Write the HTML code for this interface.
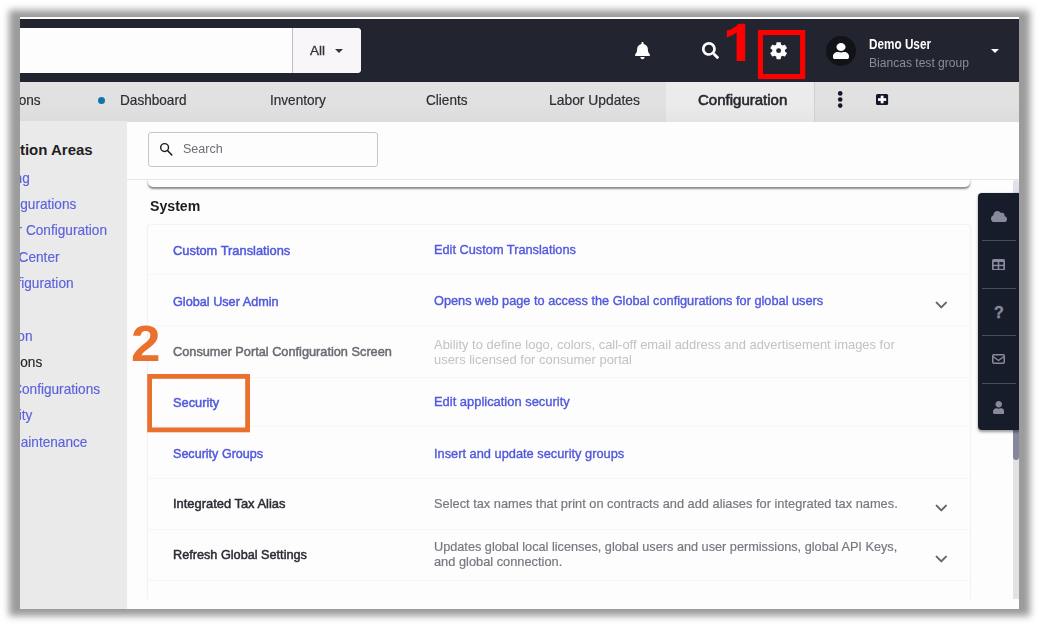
<!DOCTYPE html>
<html>
<head>
<meta charset="utf-8">
<style>
html,body{margin:0;padding:0;}
body{width:1037px;height:627px;background:#fff;position:relative;overflow:hidden;font-family:"Liberation Sans",sans-serif;}
*{box-sizing:border-box;}
.abs{position:absolute;}
.t{position:absolute;white-space:nowrap;line-height:1;}
#shadow{position:absolute;left:9.2px;top:9.7px;width:1020.8px;height:606.3px;background:#9b9b9b;filter:blur(3.9px);}
#frame{position:absolute;left:20px;top:17px;width:999px;height:592px;background:#fdfdfd;overflow:hidden;}
/* coordinates inside frame are page coords minus (20,17); use #page wrapper to keep page coords */
#page{position:absolute;left:-20px;top:-17px;width:1037px;height:627px;}
#topbar{left:20px;top:19px;width:999px;height:63px;background:#22252f;}
#nav{left:20px;top:82px;width:999px;height:39.5px;background:linear-gradient(#e3e2e3,#e1e0e1 65%,#dcdbdc);}
#nav .t{font-size:13.5px;color:#2d2d33;top:93px;}
#side{left:20px;top:120.8px;width:107px;height:488.2px;background:#ebeaeb;overflow:hidden;}
.sl{position:absolute;white-space:nowrap;font-size:14.5px;color:#5a62dc;line-height:16px;transform-origin:100% 50%;transform:scaleX(0.94);-webkit-text-stroke:0.15px currentColor;}
.row-l{position:absolute;left:173.5px;white-space:nowrap;font-size:14px;line-height:16px;-webkit-text-stroke:0.4px currentColor;transform-origin:0 50%;transform:scaleX(0.917);}
.row-r{position:absolute;left:433.5px;white-space:nowrap;font-size:14px;line-height:15px;transform-origin:0 50%;transform:scaleX(0.913);}
.blue{color:#535bd6;}
.sep{position:absolute;left:148px;width:822px;height:1px;background:#f6f5f8;}
</style>
</head>
<body>
<div id="shadow"></div>
<div id="frame"><div id="page">

<!-- top bar -->
<div id="topbar" class="abs"></div>
<div class="abs" style="left:0;top:28.4px;width:361px;height:44.4px;background:#fdfdfd;border-radius:0 4px 4px 0;"></div>
<div class="abs" style="left:293px;top:28.4px;width:68px;height:44.4px;background:#f8f6f9;border-radius:0 4px 4px 0;"></div>
<div class="abs" style="left:292.2px;top:28.4px;width:1px;height:44.4px;background:#bdbdc1;"></div>
<div class="abs" style="left:335px;top:49px;width:0;height:0;border-left:4px solid transparent;border-right:4px solid transparent;border-top:4px solid #33343c;"></div>

<!-- nav -->
<div id="nav" class="abs">
</div>
<div class="abs" style="left:666px;top:82px;width:148px;height:39.5px;background:linear-gradient(#ececec,#eaeaea 65%,#e4e4e4);"></div>
<div class="abs" style="left:814px;top:82px;width:1px;height:39.5px;background:#cfcfcf;"></div>
<div id="navt">
<div class="t" style="right:996.5px;top:91.95px;font-size:14.5px;line-height:16.5px;color:#2d2d33;-webkit-text-stroke:0.2px currentColor;transform-origin:100% 50%;transform:scaleX(0.94);">Reservations</div>
<div class="abs" style="left:97.8px;top:96.7px;width:7px;height:7px;border-radius:50%;background:#0f74aa;"></div>
</div>


<!-- top icons -->
<svg class="abs" style="left:635px;top:42.2px;" width="15" height="17.4" viewBox="0 0 448 512"><path fill="#fdfdfd" d="M224 512c35.32 0 63.97-28.65 63.97-64H160.03c0 35.35 28.65 64 63.97 64zm215.39-149.71c-19.32-20.76-55.47-51.99-55.47-154.29 0-77.7-54.48-139.9-127.94-155.16V32c0-17.67-14.32-32-31.98-32s-31.98 14.33-31.98 32v20.84C118.56 68.1 64.08 130.3 64.08 208c0 102.3-36.15 133.53-55.47 154.29-6 6.45-8.66 14.16-8.61 21.71.11 16.4 12.98 32 32.1 32h383.8c19.12 0 32-15.6 32.1-32 .05-7.55-2.61-15.27-8.61-21.71z"/></svg>
<svg class="abs" style="left:701.9px;top:42.4px;" width="17" height="17" viewBox="0 0 512 512"><path fill="#fdfdfd" d="M505 442.7L405.3 343c-4.500-4.500-10.600-7-17-7H372c27.600-35.300 44-79.700 44-128C416 93.100 322.900 0 208 0S0 93.100 0 208s93.100 208 208 208c48.300 0 92.700-16.400 128-44v16.300c0 6.400 2.500 12.500 7 17l99.700 99.700c9.400 9.400 24.600 9.400 33.900 0l28.300-28.300c9.400-9.400 9.400-24.600.1-34zM208 336c-70.700 0-128-57.200-128-128 0-70.700 57.200-128 128-128 70.700 0 128 57.200 128 128 0 70.700-57.200 128-128 128z"/></svg>
<svg class="abs" style="left:768.1px;top:40.1px;" width="21.250" height="21.250" viewBox="0 0 24 24"><path fill="#fdfdfd" d="M19.140,12.940c0.040-0.300,0.060-0.610,0.060-0.940c0-0.320-0.020-0.640-0.070-0.940l2.030-1.580c0.180-0.140,0.230-0.410,0.120-0.610l-1.920-3.320c-0.120-0.220-0.370-0.290-0.590-0.220l-2.390,0.960c-0.500-0.380-1.030-0.700-1.620-0.940L14.400,2.810c-0.040-0.240-0.240-0.410-0.480-0.410h-3.840c-0.240,0-0.430,0.170-0.470,0.410L9.250,5.350C8.660,5.590,8.120,5.920,7.630,6.290L5.240,5.330c-0.220-0.080-0.470,0-0.590,0.220L2.740,8.870C2.620,9.080,2.660,9.340,2.860,9.480l2.030,1.580C4.840,11.360,4.800,11.690,4.800,12s0.020,0.640,0.070,0.940l-2.030,1.580c-0.180,0.140-0.230,0.410-0.120,0.610l1.920,3.320c0.120,0.220,0.370,0.290,0.590,0.220l2.390-0.960c0.500,0.380,1.030,0.700,1.620,0.940l0.360,2.540c0.050,0.240,0.240,0.410,0.480,0.410h3.840c0.240,0,0.440-0.170,0.470-0.410l0.360-2.540c0.590-0.240,1.130-0.560,1.620-0.940l2.390,0.960c0.220,0.080,0.470,0,0.590-0.220l1.920-3.320c0.120-0.220,0.070-0.470-0.120-0.610L19.140,12.940z"/><circle cx="12" cy="12" r="2.800" fill="#22252f"/></svg>
<!-- avatar -->
<div class="abs" style="left:826px;top:36px;width:30px;height:30px;border-radius:50%;background:#121317;"></div>
<svg class="abs" style="left:833px;top:43px;" width="16" height="16" preserveAspectRatio="none" viewBox="0 0 448 512"><path fill="#fdfdfd" d="M224 256c70.700 0 128-57.300 128-128S294.700 0 224 0 96 57.300 96 128s57.300 128 128 128zm89.600 32h-16.700c-22.200 10.200-46.900 16-72.900 16s-50.600-5.800-72.900-16h-16.700C60.200 288 0 348.200 0 422.400V464c0 26.500 21.500 48 48 48h352c26.500 0 48-21.500 48-48v-41.600c0-74.200-60.200-134.400-134.400-134.400z"/></svg>
<div class="abs" style="left:991px;top:49px;width:0;height:0;border-left:4.5px solid transparent;border-right:4.5px solid transparent;border-top:4.5px solid #fdfdfd;"></div>
<!-- annotation 1 -->
<svg class="abs" style="left:750px;top:25px;" width="65" height="60" viewBox="750 25 65 60"><rect x="760.450" y="32.550" width="42.200" height="44" fill="none" stroke="#fe0000" stroke-width="5.100"/></svg>
<svg class="abs" style="left:720px;top:20px;" width="30" height="45" viewBox="720 20 30 45"><path fill="#fe0000" d="M745.200,23.800 L738.300,23.800 Q735,28.600 726.800,30.600 L726.800,37.500 Q732.500,36 736.600,32.600 L736.600,61.100 L745.200,61.100 Z"/></svg>
<!-- nav icons -->
<svg class="abs" style="left:830px;top:85px;" width="70" height="30" viewBox="830 85 70 30"><g fill="#12172c"><circle cx="840.200" cy="93.400" r="2.300"/><circle cx="840.200" cy="99.500" r="2.300"/><circle cx="840.200" cy="105.600" r="2.300"/><rect x="876" y="93.900" width="12.100" height="11.100" rx="1.500"/></g><g fill="#fdfdfd"><rect x="878" y="98.200" width="8.200" height="2.700"/><rect x="880.700" y="95.700" width="2.800" height="7.600"/></g></svg>


<!-- sidebar -->
<div id="side" class="abs">
<div class="t" style="right:34.3px;top:19.9px;font-size:15px;line-height:17px;color:#1f1f24;font-weight:bold;transform-origin:100% 50%;transform:scaleX(1.0);">Configuration Areas</div>
<div class="t" style="right:97.5px;top:48.9px;font-size:14.5px;line-height:16.5px;color:#5a62dc;-webkit-text-stroke:0.15px currentColor;transform-origin:100% 50%;transform:scaleX(0.94);">Accounting</div>
<div class="t" style="right:50.7px;top:75.3px;font-size:14.5px;line-height:16.5px;color:#5a62dc;-webkit-text-stroke:0.15px currentColor;transform-origin:100% 50%;transform:scaleX(0.94);">Contract Configurations</div>
<div class="t" style="right:20.3px;top:101.5px;font-size:14.5px;line-height:16.5px;color:#5a62dc;-webkit-text-stroke:0.15px currentColor;transform-origin:100% 50%;transform:scaleX(0.94);">Printer Configuration</div>
<div class="t" style="right:67.0px;top:127.8px;font-size:14.5px;line-height:16.5px;color:#5a62dc;-webkit-text-stroke:0.15px currentColor;transform-origin:100% 50%;transform:scaleX(0.94);">Call Center</div>
<div class="t" style="right:53.0px;top:154.4px;font-size:14.5px;line-height:16.5px;color:#5a62dc;-webkit-text-stroke:0.15px currentColor;transform-origin:100% 50%;transform:scaleX(0.94);">Email Configuration</div>
<div class="t" style="right:94.0px;top:207.4px;font-size:14.5px;line-height:16.5px;color:#5a62dc;-webkit-text-stroke:0.15px currentColor;transform-origin:100% 50%;transform:scaleX(0.94);">Navigation</div>
<div class="t" style="right:84.5px;top:233.4px;font-size:14.5px;line-height:16.5px;color:#1f1f24;-webkit-text-stroke:0.15px currentColor;transform-origin:100% 50%;transform:scaleX(0.94);">Add ons</div>
<div class="t" style="right:27.4px;top:259.8px;font-size:14.5px;line-height:16.5px;color:#5a62dc;-webkit-text-stroke:0.15px currentColor;transform-origin:100% 50%;transform:scaleX(0.94);">Quote Configurations</div>
<div class="t" style="right:95.0px;top:286.2px;font-size:14.5px;line-height:16.5px;color:#5a62dc;-webkit-text-stroke:0.15px currentColor;transform-origin:100% 50%;transform:scaleX(0.94);">Security</div>
<div class="t" style="right:39.5px;top:312.9px;font-size:14.5px;line-height:16.5px;color:#5a62dc;-webkit-text-stroke:0.15px currentColor;transform-origin:100% 50%;transform:scaleX(0.94);">System Maintenance</div>

</div>

<div class="abs" style="left:127px;top:179px;width:892px;height:1px;background:#e6e6ea;"></div>
<!-- main -->
<div class="abs" style="left:147.6px;top:132px;width:230px;height:35px;border:1px solid #c6c6ca;border-radius:3px;background:#fdfdfd;"></div>
<svg class="abs" style="left:159px;top:142.2px;" width="15" height="15" viewBox="0 0 15 15"><circle cx="5.600" cy="5.500" r="3.900" fill="none" stroke="#1c1c21" stroke-width="1.450"/><path d="M8.500 8.500 L12.800 13" stroke="#1c1c21" stroke-width="1.550" stroke-linecap="round"/></svg>
<!-- prev card bottom -->
<div class="abs" style="left:148px;top:160px;width:822px;height:27px;background:#fdfdfd;border-radius:0 0 5px 5px;box-shadow:0 1.5px 2px rgba(0,0,0,0.45);clip-path:inset(20px -6px -8px -6px);"></div>
<!-- card -->
<div class="abs" style="left:147.3px;top:224.4px;width:824px;height:400px;background:#fdfdfd;border:1px solid #f3f2f6;border-radius:4px;box-shadow:0 0 2px rgba(0,0,0,0.04);"></div>
<div class="sep" style="top:274.2px;"></div>
<div class="sep" style="top:325.1px;"></div>
<div class="sep" style="top:376.5px;"></div>
<div class="sep" style="top:426.3px;"></div>
<div class="sep" style="top:477.8px;"></div>
<div class="sep" style="top:528.5px;"></div>
<div class="sep" style="top:579.5px;"></div>
<svg class="abs" style="left:934.500px;top:300.7px;" width="12.600" height="8.800" viewBox="0 0 12.600 8.800"><path d="M1.600 1.600 L6.300 6.400 L11 1.600" fill="none" stroke="#66666d" stroke-width="2" stroke-linecap="round" stroke-linejoin="round"/></svg>
<svg class="abs" style="left:934.500px;top:504.2px;" width="12.600" height="8.800" viewBox="0 0 12.600 8.800"><path d="M1.600 1.600 L6.300 6.400 L11 1.600" fill="none" stroke="#66666d" stroke-width="2" stroke-linecap="round" stroke-linejoin="round"/></svg>
<svg class="abs" style="left:934.500px;top:554.7px;" width="12.600" height="8.800" viewBox="0 0 12.600 8.800"><path d="M1.600 1.600 L6.300 6.400 L11 1.600" fill="none" stroke="#66666d" stroke-width="2" stroke-linecap="round" stroke-linejoin="round"/></svg>

<!-- scrollbar -->
<div class="abs" style="left:1013px;top:180px;width:6px;height:418.5px;background:#e3e1e3;border-radius:3px 3px 0 0;"></div>
<div class="abs" style="left:1013px;top:189px;width:6px;height:8px;background:#dcdfee;"></div>
<div class="abs" style="left:1013px;top:196px;width:5.8px;height:263.5px;background:#85879c;border-radius:3px;"></div>
<!-- bottom mask -->
<div class="abs" style="left:127px;top:598.5px;width:892px;height:11px;background:#fdfdfd;"></div>
<!-- right panel -->
<div class="abs" style="left:977.5px;top:193px;width:42px;height:236.500px;background:#171c2b;border-radius:4px 0 0 4px;box-shadow:0 1.5px 3px rgba(0,0,0,0.4);"></div>
<div class="abs" style="left:982px;top:239.9px;width:34px;height:1px;background:#484d5e;"></div>
<div class="abs" style="left:982px;top:287.5px;width:34px;height:1px;background:#484d5e;"></div>
<div class="abs" style="left:982px;top:335.0px;width:34px;height:1px;background:#484d5e;"></div>
<div class="abs" style="left:982px;top:382.5px;width:34px;height:1px;background:#484d5e;"></div>

<svg class="abs" style="left:991px;top:210.600px;" width="16" height="11.500" viewBox="0 0 640 448" preserveAspectRatio="none"><path fill="#868a9b" d="M537.600 194.800c4.100-10.700 6.400-22.400 6.400-34.600 0-53-43-96-96-96-19.700 0-38.100 6-53.300 16.200C367 32.200 315.300 0 256 0c-88.400 0-160 71.600-160 160 0 2.700.1 5.400.2 8.100C40.200 187.800 0 241.200 0 304c0 79.500 64.500 144 144 144h368c70.700 0 128-57.300 128-128 0-61.900-44-113.600-102.400-125.200z"/></svg>
<svg class="abs" style="left:992.300px;top:258.500px;" width="13" height="11.500" viewBox="0 0 13 11.500"><rect x="0" y="0" width="13" height="11.500" rx="1.500" fill="#868a9b"/><rect x="1.700" y="3" width="4" height="2.700" fill="#171c2b"/><rect x="7.300" y="3" width="4" height="2.700" fill="#171c2b"/><rect x="1.700" y="7.200" width="4" height="2.700" fill="#171c2b"/><rect x="7.300" y="7.200" width="4" height="2.700" fill="#171c2b"/></svg>
<div class="t" style="left:994.1px;top:304.5px;font-size:16px;font-weight:bold;color:#868a9b;-webkit-text-stroke:0.4px #868a9b;">?</div>
<svg class="abs" style="left:991.600px;top:354.200px;" width="13" height="10" viewBox="0 0 13 10"><rect x="0.750" y="0.750" width="11.500" height="8.500" rx="1.200" fill="none" stroke="#868a9b" stroke-width="1.500"/><path d="M1 2.500 L6.500 6.500 L12 2.500" fill="none" stroke="#868a9b" stroke-width="1.400"/></svg>
<svg class="abs" style="left:992.700px;top:400.600px;" width="11.500" height="13" viewBox="0 0 448 512" preserveAspectRatio="none"><path fill="#868a9b" d="M224 256c70.700 0 128-57.300 128-128S294.700 0 224 0 96 57.300 96 128s57.300 128 128 128zm89.600 32h-16.700c-22.200 10.200-46.900 16-72.900 16s-50.600-5.800-72.900-16h-16.700C60.200 288 0 348.200 0 422.400V464c0 26.500 21.500 48 48 48h352c26.500 0 48-21.500 48-48v-41.600c0-74.200-60.200-134.400-134.400-134.400z"/></svg>
<div class="t" style="left:119.9px;top:92.0px;font-size:14.5px;line-height:16.5px;color:#2d2d33;-webkit-text-stroke:0.2px currentColor;transform-origin:0 50%;transform:scaleX(0.9374);">Dashboard</div>
<div class="t" style="left:270.0px;top:92.0px;font-size:14.5px;line-height:16.5px;color:#2d2d33;-webkit-text-stroke:0.2px currentColor;transform-origin:0 50%;transform:scaleX(0.9354);">Inventory</div>
<div class="t" style="left:425.5px;top:92.0px;font-size:14.5px;line-height:16.5px;color:#2d2d33;-webkit-text-stroke:0.2px currentColor;transform-origin:0 50%;transform:scaleX(0.9362);">Clients</div>
<div class="t" style="left:549.0px;top:92.0px;font-size:14.5px;line-height:16.5px;color:#2d2d33;-webkit-text-stroke:0.2px currentColor;transform-origin:0 50%;transform:scaleX(0.9566);">Labor Updates</div>
<div class="t" style="left:697.7px;top:92.0px;font-size:14.5px;line-height:16.5px;color:#26262c;-webkit-text-stroke:0.55px currentColor;transform-origin:0 50%;transform:scaleX(1.0354);">Configuration</div>
<div class="t" style="left:173.3px;top:242.8px;font-size:13.5px;line-height:15.5px;color:#5159dc;-webkit-text-stroke:0.5px currentColor;transform-origin:0 50%;transform:scaleX(0.9532);">Custom Translations</div>
<div class="t" style="left:173.3px;top:293.6px;font-size:13.5px;line-height:15.5px;color:#5159dc;-webkit-text-stroke:0.5px currentColor;transform-origin:0 50%;transform:scaleX(0.9381);">Global User Admin</div>
<div class="t" style="left:173.3px;top:343.9px;font-size:13.5px;line-height:15.5px;color:#6a6b73;-webkit-text-stroke:0.5px currentColor;transform-origin:0 50%;transform:scaleX(0.9440);">Consumer Portal Configuration Screen</div>
<div class="t" style="left:173.3px;top:395.1px;font-size:13.5px;line-height:15.5px;color:#5159dc;-webkit-text-stroke:0.5px currentColor;transform-origin:0 50%;transform:scaleX(0.9471);">Security</div>
<div class="t" style="left:173.3px;top:445.6px;font-size:13.5px;line-height:15.5px;color:#5159dc;-webkit-text-stroke:0.5px currentColor;transform-origin:0 50%;transform:scaleX(0.9308);">Security Groups</div>
<div class="t" style="left:173.3px;top:495.9px;font-size:13.5px;line-height:15.5px;color:#2b2b33;-webkit-text-stroke:0.5px currentColor;transform-origin:0 50%;transform:scaleX(0.9560);">Integrated Tax Alias</div>
<div class="t" style="left:173.3px;top:547.0px;font-size:13.5px;line-height:15.5px;color:#2b2b33;-webkit-text-stroke:0.5px currentColor;transform-origin:0 50%;transform:scaleX(0.9391);">Refresh Global Settings</div>
<div class="t" style="left:433.8px;top:242.3px;font-size:13.5px;line-height:15.5px;color:#5159dc;-webkit-text-stroke:0.4px currentColor;transform-origin:0 50%;transform:scaleX(0.9456);">Edit Custom Translations</div>
<div class="t" style="left:433.8px;top:293.2px;font-size:13.5px;line-height:15.5px;color:#5159dc;-webkit-text-stroke:0.4px currentColor;transform-origin:0 50%;transform:scaleX(0.9447);">Opens web page to access the Global configurations for global users</div>
<div class="t" style="left:433.8px;top:336.9px;font-size:13.5px;line-height:15.5px;color:#c2c2c6;transform-origin:0 50%;transform:scaleX(0.9583);">Ability to define logo, colors, call-off email address and advertisement images for</div>
<div class="t" style="left:433.8px;top:352.2px;font-size:13.5px;line-height:15.5px;color:#c2c2c6;transform-origin:0 50%;transform:scaleX(0.9586);">users licensed for consumer portal</div>
<div class="t" style="left:433.8px;top:394.4px;font-size:13.5px;line-height:15.5px;color:#5159dc;-webkit-text-stroke:0.4px currentColor;transform-origin:0 50%;transform:scaleX(0.9568);">Edit application security</div>
<div class="t" style="left:433.8px;top:445.9px;font-size:13.5px;line-height:15.5px;color:#5159dc;-webkit-text-stroke:0.4px currentColor;transform-origin:0 50%;transform:scaleX(0.9492);">Insert and update security groups</div>
<div class="t" style="left:433.8px;top:495.9px;font-size:13.5px;line-height:15.5px;color:#77787f;-webkit-text-stroke:0.2px currentColor;transform-origin:0 50%;transform:scaleX(0.9492);">Select tax names that print on contracts and add aliases for integrated tax names.</div>
<div class="t" style="left:433.8px;top:539.1px;font-size:13.5px;line-height:15.5px;color:#77787f;-webkit-text-stroke:0.2px currentColor;transform-origin:0 50%;transform:scaleX(0.9409);">Updates global local licenses, global users and user permissions, global API Keys,</div>
<div class="t" style="left:433.8px;top:554.2px;font-size:13.5px;line-height:15.5px;color:#77787f;-webkit-text-stroke:0.2px currentColor;transform-origin:0 50%;transform:scaleX(0.9489);">and global connection.</div>
<div class="t" style="left:149.7px;top:198.1px;font-size:14px;line-height:16px;color:#1d1d22;font-weight:bold;transform-origin:0 50%;transform:scaleX(1.0098);">System</div>
<div class="t" style="left:183.0px;top:142.3px;font-size:12.5px;line-height:14.5px;color:#6d6e76;transform-origin:0 50%;transform:scaleX(1.0023);">Search</div>
<div class="t" style="left:310.0px;top:43.3px;font-size:13px;line-height:15px;color:#33333a;-webkit-text-stroke:0.3px currentColor;transform-origin:0 50%;transform:scaleX(1.0378);">All</div>
<div class="t" style="left:869.0px;top:36.0px;font-size:14px;line-height:16px;color:#fdfdfd;font-weight:bold;transform-origin:0 50%;transform:scaleX(0.8387);">Demo User</div>
<div class="t" style="left:869.0px;top:55.8px;font-size:12px;line-height:14px;color:#8b8c95;transform-origin:0 50%;transform:scaleX(1.0060);">Biancas test group</div>

<!-- annotation 2 -->
<svg class="abs" style="left:140px;top:370px;" width="120" height="70" viewBox="140 370 120 70"><rect x="149.600" y="376.400" width="98" height="53.500" fill="none" stroke="#e9702d" stroke-width="4.800"/></svg>
<div class="t" style="left:131.300px;top:318.600px;font-size:50px;font-weight:bold;color:#e9702d;transform-origin:0 50%;transform:scaleX(1.06);">2</div>


</div></div>
</body>
</html>
